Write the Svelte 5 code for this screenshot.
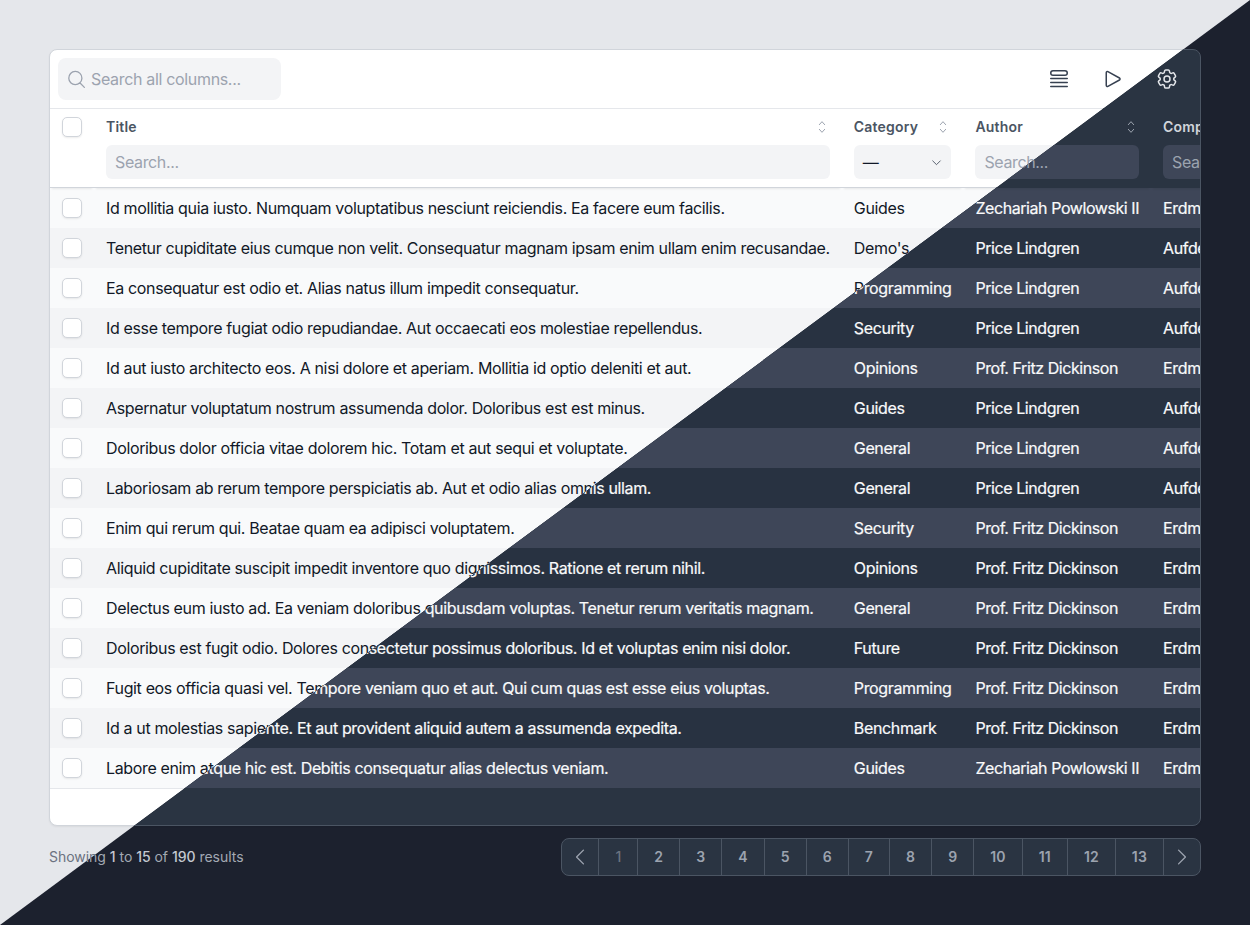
<script>
  const P = 'Price Lindgren', F = 'Prof. Fritz Dickinson', Z = 'Zechariah Powlowski II';
  const A = 'Aufderhar Group', E = 'Erdman Inc';

  const rows = [
    ['Id mollitia quia iusto. Numquam voluptatibus nesciunt reiciendis. Ea facere eum facilis.', 'Guides', Z, E],
    ['Tenetur cupiditate eius cumque non velit. Consequatur magnam ipsam enim ullam enim recusandae.', "Demo's", P, A],
    ['Ea consequatur est odio et. Alias natus illum impedit consequatur.', 'Programming', P, A],
    ['Id esse tempore fugiat odio repudiandae. Aut occaecati eos molestiae repellendus.', 'Security', P, A],
    ['Id aut iusto architecto eos. A nisi dolore et aperiam. Mollitia id optio deleniti et aut.', 'Opinions', F, E],
    ['Aspernatur voluptatum nostrum assumenda dolor. Doloribus est est minus.', 'Guides', P, A],
    ['Doloribus dolor officia vitae dolorem hic. Totam et aut sequi et voluptate.', 'General', P, A],
    ['Laboriosam ab rerum tempore perspiciatis ab. Aut et odio alias omnis ullam.', 'General', P, A],
    ['Enim qui rerum qui. Beatae quam ea adipisci voluptatem.', 'Security', F, E],
    ['Aliquid cupiditate suscipit impedit inventore quo dignissimos. Ratione et rerum nihil.', 'Opinions', F, E],
    ['Delectus eum iusto ad. Ea veniam doloribus quibusdam voluptas. Tenetur rerum veritatis magnam.', 'General', F, E],
    ['Doloribus est fugit odio. Dolores consectetur possimus doloribus. Id et voluptas enim nisi dolor.', 'Future', F, E],
    ['Fugit eos officia quasi vel. Tempore veniam quo et aut. Qui cum quas est esse eius voluptas.', 'Programming', F, E],
    ['Id a ut molestias sapiente. Et aut provident aliquid autem a assumenda expedita.', 'Benchmark', F, E],
    ['Labore enim atque hic est. Debitis consequatur alias delectus veniam.', 'Guides', Z, E]
  ];

  const pages = [2, 3, 4, 5, 6, 7, 8, 9, 10, 11, 12, 13];
</script>

{#snippet sortIcon()}
  <svg class="sort" viewBox="0 0 24 24" fill="none" stroke="currentColor" stroke-width="1.5" stroke-linecap="round" stroke-linejoin="round">
    <path d="M8 8.5 12 4l4 4.5M8 15.5l4 4.5 4-4.5" />
  </svg>
{/snippet}

{#snippet screen()}
  <div class="card">
    <div class="toolbar">
      <div class="global-search">
        <svg class="search-icon" viewBox="0 0 24 24" fill="none" stroke="currentColor" stroke-width="1.5" stroke-linecap="round" stroke-linejoin="round">
          <path d="m21 21-5.2-5.2M15.8 15.8A7.5 7.5 0 1 0 5.2 5.2a7.5 7.5 0 0 0 10.6 10.6Z" />
        </svg>
        <span>Search all columns...</span>
      </div>
      <div class="tools">
        <svg class="tool" viewBox="0 0 24 24" fill="none" stroke="currentColor" stroke-width="1.5" stroke-linecap="round">
          <rect x="3.75" y="3.75" width="16.5" height="4.5" rx="2.25" />
          <path d="M3.75 11.5h16.5M3.75 15.5h16.5M3.75 19.5h16.5" />
        </svg>
        <svg class="tool" viewBox="0 0 24 24" fill="none" stroke="currentColor" stroke-width="1.5" stroke-linejoin="round">
          <path d="M5.25 5.653c0-.856.917-1.398 1.667-.986l11.54 6.348a1.125 1.125 0 0 1 0 1.971l-11.54 6.347a1.125 1.125 0 0 1-1.667-.985V5.653Z" />
        </svg>
        <svg class="tool" viewBox="0 0 24 24" fill="none" stroke="currentColor" stroke-width="1.5" stroke-linecap="round" stroke-linejoin="round">
          <path d="M9.594 3.94c.09-.542.56-.94 1.11-.94h2.593c.55 0 1.02.398 1.11.94l.213 1.281c.063.374.313.686.645.87.074.04.147.083.22.127.324.196.72.257 1.075.124l1.217-.456a1.125 1.125 0 0 1 1.37.49l1.296 2.247a1.125 1.125 0 0 1-.26 1.431l-1.003.827c-.293.24-.438.613-.431.992a6.759 6.759 0 0 1 0 .255c-.007.378.138.75.43.99l1.005.828c.424.35.534.954.26 1.43l-1.298 2.247a1.125 1.125 0 0 1-1.369.491l-1.217-.456c-.355-.133-.75-.072-1.076.124a6.57 6.57 0 0 1-.22.128c-.331.183-.581.495-.644.869l-.213 1.28c-.09.543-.56.941-1.11.941h-2.594c-.55 0-1.02-.398-1.11-.94l-.213-1.281c-.062-.374-.312-.686-.644-.87a6.52 6.52 0 0 1-.22-.127c-.325-.196-.72-.257-1.076-.124l-1.217.456a1.125 1.125 0 0 1-1.369-.49l-1.297-2.247a1.125 1.125 0 0 1 .26-1.431l1.004-.827c.292-.24.437-.613.43-.992a6.932 6.932 0 0 1 0-.255c.007-.378-.138-.75-.43-.99l-1.004-.828a1.125 1.125 0 0 1-.26-1.43l1.297-2.247a1.125 1.125 0 0 1 1.37-.491l1.216.456c.356.133.751.072 1.076-.124.072-.044.146-.087.22-.128.332-.183.582-.495.644-.869l.214-1.281Z" />
          <path d="M15 12a3 3 0 1 1-6 0 3 3 0 0 1 6 0Z" />
        </svg>
      </div>
    </div>

    <div class="table-wrap">
      <table>
        <thead>
          <tr>
            <th class="check-cell"><span class="check"></span></th>
            <th class="grow">
              <div class="label">Title {@render sortIcon()}</div>
              <div class="field">Search...</div>
            </th>
            <th>
              <div class="label">Category {@render sortIcon()}</div>
              <div class="field select">
                <span class="dash">—</span>
                <svg class="caret" viewBox="0 0 24 24" fill="none" stroke="currentColor" stroke-width="1.5" stroke-linecap="round" stroke-linejoin="round"><path d="m5 9 7 7 7-7" /></svg>
              </div>
            </th>
            <th>
              <div class="label">Author {@render sortIcon()}</div>
              <div class="field">Search...</div>
            </th>
            <th>
              <div class="label">Company {@render sortIcon()}</div>
              <div class="field">Search...</div>
            </th>
          </tr>
        </thead>
        <tbody>
          {#each rows as row, i}
            <tr class:alt={i % 2 === 1}>
              <td class="check-cell"><span class="check"></span></td>
              {#each row as value}
                <td>{value}</td>
              {/each}
            </tr>
          {/each}
        </tbody>
      </table>
    </div>
    <div class="filler"></div>
  </div>

  <div class="footer">
    <p class="summary">Showing <b>1</b> to <b>15</b> of <b>190</b> results</p>
    <nav class="pager">
      <span class="page arrow">
        <svg viewBox="0 0 24 24" fill="none" stroke="currentColor" stroke-width="1.5" stroke-linecap="round" stroke-linejoin="round"><path d="M15.75 19.5 8.25 12l7.5-7.5" /></svg>
      </span>
      <span class="page current">1</span>
      {#each pages as n}
        <span class="page">{n}</span>
      {/each}
      <span class="page arrow">
        <svg viewBox="0 0 24 24" fill="none" stroke="currentColor" stroke-width="1.5" stroke-linecap="round" stroke-linejoin="round"><path d="m8.25 4.5 7.5 7.5-7.5 7.5" /></svg>
      </span>
    </nav>
  </div>
{/snippet}

<main class="sheet">
  <div class="layer light">{@render screen()}</div>
  <!-- same page in dark mode, cut along the diagonal -->
  <div class="layer dark" aria-hidden="true">{@render screen()}</div>
</main>

<style>
  :global(body) {
    margin: 0;
  }

  .sheet {
    position: relative;
    width: 1250px;
    height: 925px;
    overflow: hidden;
    font-family: Inter, "Liberation Sans", sans-serif;
    font-size: 16px;
    line-height: 24px;
    letter-spacing: -0.36px;
  }

  .layer {
    box-sizing: border-box;
    height: 925px;
    padding: 49px;
    background: var(--page);
  }

  .light {
    isolation: isolate;
    --page: #e5e7eb;
    --card: #ffffff;
    --card-line: #d1d5db;
    --line: #e5e7eb;
    --head-line: #d1d5db;
    --field: #f3f4f6;
    --placeholder: #9ca3af;
    --text: #111827;
    --label: #4b5563;
    --sort: #9ca3af;
    --icon: #374151;
    --row: #f9fafb;
    --row-alt: #f3f4f6;
    --muted: #6b7280;
    --strong: #4b5563;
    --page-text: #6b7280;
    --page-off: #d1d5db;
  }

  .dark {
    position: absolute;
    inset: 0;
    clip-path: polygon(100% 0, 100% 100%, 0 100%);
    --page: #1c212e;
    --card: #2a3442;
    --card-line: #4b5563;
    --line: #2a3442;
    --head-line: #2a3442;
    --field: #3e4658;
    --placeholder: #9ca3af;
    --text: #f9fafb;
    --label: #d1d5db;
    --sort: #9ca3af;
    --icon: #e5e7eb;
    --row: #3e4658;
    --row-alt: #283241;
    --muted: #a3a9b3;
    --strong: #c4c9d1;
    --page-text: #9ca3af;
    --page-off: #6b7280;
  }

  .dark td {
    -webkit-text-stroke: 0.2px currentColor;
  }

  .card {
    box-sizing: border-box;
    height: 777px;
    background: var(--card);
    border: 1px solid var(--card-line);
    border-radius: 8px;
    overflow: hidden;
    box-shadow: 0 1px 2px rgba(0, 0, 0, 0.06);
  }

  .toolbar {
    display: flex;
    align-items: center;
    justify-content: space-between;
    height: 58px;
    padding: 0 8px;
    border-bottom: 1px solid var(--line);
  }

  .global-search {
    display: flex;
    align-items: center;
    gap: 4px;
    width: 223px;
    height: 42px;
    box-sizing: border-box;
    padding-left: 8px;
    background: var(--field);
    border-radius: 8px;
    color: var(--placeholder);
    letter-spacing: -0.33px;
  }

  .search-icon {
    width: 21px;
    height: 21px;
  }

  .tools {
    display: flex;
    gap: 30px;
    padding-right: 13px;
    color: var(--icon);
  }

  .tool {
    width: 24px;
    height: 24px;
  }

  .table-wrap {
    overflow: hidden;
  }

  table {
    border-collapse: separate;
    border-spacing: 0;
    white-space: nowrap;
  }

  th {
    position: relative;
    z-index: 1;
    padding: 8px 12px;
    vertical-align: top;
    text-align: left;
    font-weight: 400;
    border-bottom: 1px solid var(--head-line);
    box-shadow: 0 3px 2px -2px rgba(0, 0, 0, 0.08);
  }

  td {
    padding: 8px 12px;
    color: var(--text);
    background: var(--row);
  }

  td:nth-child(4) {
    letter-spacing: -0.43px;
  }

  .alt td {
    background: var(--row-alt);
  }

  .check-cell {
    width: 20px;
  }

  .check {
    display: block;
    box-sizing: border-box;
    width: 20px;
    height: 20px;
    background: #fff;
    border: 1px solid #d1d5db;
    border-radius: 5px;
    box-shadow: 0 1px 2px rgba(0, 0, 0, 0.08);
  }

  td.check-cell .check {
    margin: 2px 0;
  }

  .label {
    display: flex;
    align-items: center;
    justify-content: space-between;
    height: 20px;
    margin-bottom: 8px;
    font-size: 14px;
    font-weight: 600;
    line-height: 20px;
    letter-spacing: 0.2px;
    color: var(--label);
  }

  .sort {
    width: 16px;
    height: 16px;
    color: var(--sort);
  }

  .field {
    display: flex;
    align-items: center;
    justify-content: space-between;
    height: 34px;
    padding: 0 9px;
    background: var(--field);
    border-radius: 6px;
    color: var(--placeholder);
  }

  .select {
    padding-right: 8px;
  }

  .dash {
    color: var(--text);
  }

  .caret {
    width: 13px;
    height: 13px;
    color: var(--icon);
  }

  .filler {
    height: 37px;
    border-top: 1px solid var(--line);
  }

  .footer {
    display: flex;
    align-items: center;
    justify-content: space-between;
    width: 1152px;
    margin-top: 12px;
  }

  .summary {
    margin: 0;
    font-size: 14px;
    letter-spacing: -0.03px;
    color: var(--muted);
  }

  .summary b {
    font-weight: 500;
    color: var(--strong);
  }

  .pager {
    display: flex;
    height: 38px;
    box-sizing: border-box;
    background: var(--card);
    border: 1px solid var(--card-line);
    border-radius: 8px;
    overflow: hidden;
    font-size: 14px;
    font-weight: 600;
    letter-spacing: 0.15px;
    color: var(--page-text);
  }

  .page {
    display: flex;
    align-items: center;
    justify-content: center;
    padding: 0 16px;
    border-left: 1px solid var(--card-line);
  }

  .page:first-child {
    border-left: none;
  }

  .arrow {
    padding: 0 7px;
  }

  .arrow svg {
    width: 22px;
    height: 22px;
  }

  .current {
    color: var(--page-off);
    font-weight: 500;
  }
</style>
